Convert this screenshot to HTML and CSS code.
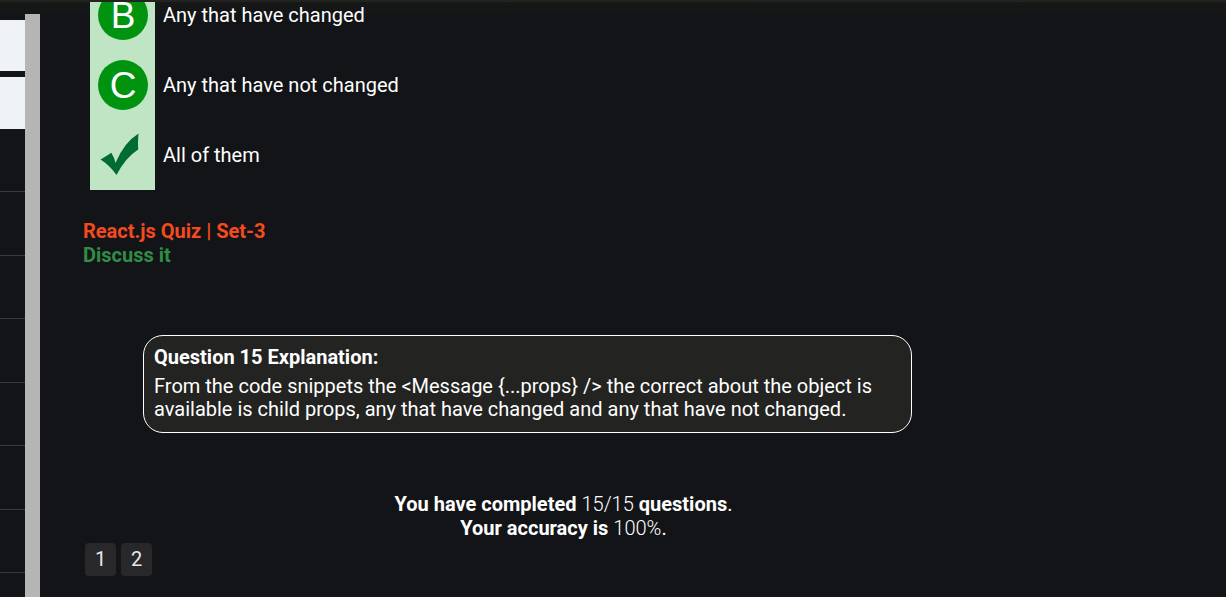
FILE: index.html
```html
<!DOCTYPE html>
<html lang="en">
<head>
<meta charset="utf-8">
<title>React.js Quiz | Set-3</title>
<link rel="stylesheet" href="styles.css">
</head>
<body>
<header class="topbar"></header>
<div class="layout">
  <aside class="sidebar">
    <div class="topics">
      <div class="topic-card"></div>
      <div class="topic-card"></div>
      <ul class="topic-list">
        <li></li><li></li><li></li><li></li><li></li><li></li><li></li><li></li>
      </ul>
    </div>
    <div class="scrollbar"></div>
  </aside>
  <main class="content">
    <ul class="answers">
      <li class="answer"><span class="mark"><span class="letter">B</span></span><span>Any that have changed</span></li>
      <li class="answer"><span class="mark"><span class="letter">C</span></span><span>Any that have not changed</span></li>
      <li class="answer"><span class="mark"><svg class="tick" viewBox="0 0 50 50" role="img" aria-label="Correct"><path d="M2.5 29.5Q8 26.5 13.3 22.8Q16.3 27.5 17.5 33Q26 12.5 40.5 3.5Q39.6 12 40.2 19.5Q27.5 27.5 18.5 45Q12 35.5 2.5 29.5Z"/></svg></span><span>All of them</span></li>
    </ul>
    <div class="links">
      <a class="quiz-link" href="#quiz">React.js Quiz | Set-3</a>
      <a class="discuss-link" href="#discuss">Discuss it</a>
    </div>
    <section class="explanation">
      <h2>Question 15 Explanation:</h2>
      <p>From the code snippets the &lt;Message {...props} /&gt; the correct about the object is available is child props, any that have changed and any that have not changed.</p>
    </section>
    <p class="result"><b>You have completed</b> <span class="figure">15/15</span> <b>questions</b>.<br><b>Your accuracy is</b> <span class="figure">100%</span>.</p>
    <nav class="pages" aria-label="Quiz pages">
      <a href="#page1">1</a>
      <a href="#page2">2</a>
    </nav>
  </main>
</div>
</body>
</html>
```

FILE: styles.css
```css
* { box-sizing: border-box; }

body {
  margin: 0;
  height: 100vh;
  display: flex;
  flex-direction: column;
  overflow: hidden;
  background: #131417;
  color: #fff;
  font: 20px/24px Roboto, sans-serif;
}

ul { list-style: none; margin: 0; padding: 0; }
p, h2 { margin: 0; }
a { text-decoration: none; }

.topbar { flex: none; height: 2px; background: #232321; }

.layout {
  flex: 1;
  min-height: 0;
  display: flex;
  background: linear-gradient(#171817, #131417 16px);
}

.sidebar {
  flex: none;
  width: 40px;
  padding-top: 12px;
  display: flex;
  overflow: hidden;
}

.topics { flex: 1; padding-top: 6px; }
.topic-card { height: 51px; background: #eff3f6; }
.topic-card + .topic-card { height: 52px; margin-top: 6px; }
.topic-list li { height: 63px; border-bottom: 1px solid #393a3d; }
.topic-list li:nth-child(even) { height: 64px; }
.scrollbar { flex: none; width: 15px; background: #b5b5b5; }

.content {
  flex: 1;
  min-width: 0;
  padding-left: 43px;
  overflow: hidden;
}

.answers { margin: -22px 0 0 7px; }
.answer { display: flex; align-items: center; gap: 8px; }
.mark {
  width: 65px;
  height: 70px;
  padding: 10px 7px 10px 8px;
  background: #bfe5c4;
}
.letter {
  display: block;
  height: 50px;
  border-radius: 50%;
  background: #009310;
  text-align: center;
  font: 37px/52px "Liberation Sans", sans-serif;
}
.tick { display: block; width: 50px; height: 50px; fill: #006b35; }

.links {
  display: flex;
  flex-direction: column;
  align-items: flex-start;
  margin-top: 29px;
  font-weight: 700;
}
.quiz-link { color: #f44a20; }
.discuss-link { color: #2f8d46; }

.explanation {
  max-width: 769px;
  margin: 68px 60px 0;
  padding: 9px 10px 11px;
  border: 1px solid #fff;
  border-radius: 20px;
  background: #232321;
  line-height: 23px;
}
.explanation h2 { margin-bottom: 6px; font: 700 20px/24px Roboto, sans-serif; }

.result { max-width: 961px; margin-top: 59px; text-align: center; }
.figure { font-weight: 300; }

.pages { display: flex; gap: 5px; margin: 3px 2px 0; }
.pages a {
  width: 31px;
  border-radius: 4px;
  background: #28282a;
  color: #e8e8e8;
  text-align: center;
  line-height: 33px;
}
```
